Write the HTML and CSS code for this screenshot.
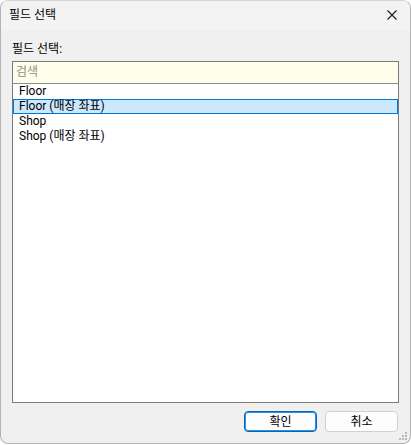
FILE: index.html
```html
<!DOCTYPE html>
<html lang="ko">
<head>
<meta charset="utf-8">
<title>필드 선택</title>
<link rel="stylesheet" href="styles.css">
</head>
<body>
<div class="window">
  <div class="titlebar">
    <span class="title">필드 선택</span>
    <span class="close">
      <svg width="12" height="12" viewBox="0 0 12 12"><path d="M1.5 1.5 L10.5 10.5 M10.5 1.5 L1.5 10.5" stroke="#1a1a1a" stroke-width="1.1" fill="none"/></svg>
    </span>
  </div>
  <div class="content">
    <div class="label">필드 선택:</div>
    <div class="listbox">
      <div class="search">검색</div>
      <div class="items">
        <div class="item">Floor</div>
        <div class="item selected">Floor (매장 좌표)</div>
        <div class="item">Shop</div>
        <div class="item">Shop (매장 좌표)</div>
      </div>
    </div>
    <div class="buttons">
      <button class="btn primary">확인</button>
      <button class="btn">취소</button>
    </div>
  </div>
  <svg class="grip" width="9" height="9" viewBox="0 0 9 9">
    <rect x="6" y="0" width="2" height="2" fill="#b8b8b8"/>
    <rect x="3" y="3" width="2" height="2" fill="#b8b8b8"/>
    <rect x="6" y="3" width="2" height="2" fill="#b8b8b8"/>
    <rect x="0" y="6" width="2" height="2" fill="#b8b8b8"/>
    <rect x="3" y="6" width="2" height="2" fill="#b8b8b8"/>
    <rect x="6" y="6" width="2" height="2" fill="#b8b8b8"/>
  </svg>
</div>
</body>
</html>
```

FILE: styles.css
```css
html, body {
  margin: 0;
  padding: 0;
  background: #ffffff;
}
body {
  font-family: Roboto, "Noto Sans CJK KR", sans-serif;
  font-size: 12px;
  color: #000;
}
.window {
  position: relative;
  box-sizing: border-box;
  width: 411px;
  height: 444px;
  border: 1px solid #b4b4b4;
  border-top-color: #d4d4d4;
  border-radius: 8px;
  background: #f0f0f0;
  display: flex;
  flex-direction: column;
  overflow: hidden;
}
.titlebar {
  height: 29px;
  background: #f3f3f3;
  display: flex;
  align-items: center;
  justify-content: space-between;
  padding: 0 9px 0 8px;
}
.title {
  font-size: 12px;
  line-height: 16px;
  margin-top: -2px;
}
.close {
  display: flex;
  width: 12px;
  height: 12px;
  margin-top: -1px;
  margin-right: 3px;
}
.content {
  flex: 1;
  display: flex;
  flex-direction: column;
  padding: 0 11px;
}
.label {
  line-height: 16px;
  margin-top: 11px;
}
.listbox {
  margin-top: 4px;
  height: 342px;
  box-sizing: border-box;
  border: 1px solid #7a7a7a;
  background: #ffffff;
  display: flex;
  flex-direction: column;
}
.search {
  height: 22px;
  box-sizing: border-box;
  border-bottom: 1px solid #8e8e8e;
  background: #fefeea;
  color: #8f8f8f;
  line-height: 21px;
  padding-left: 3px;
}
.items {
  display: flex;
  flex-direction: column;
}
.item {
  height: 15px;
  line-height: 15px;
  padding-left: 6px;
  box-sizing: border-box;
  white-space: nowrap;
}
.item.selected {
  background: #cce8ff;
  box-shadow: inset 0 0 0 1px #0078d7;
}
.buttons {
  margin-top: 8px;
  display: flex;
  justify-content: flex-end;
  gap: 8px;
  padding-right: 1px;
}
.btn {
  width: 73px;
  height: 21px;
  box-sizing: border-box;
  border: 1px solid #d0d0d0;
  border-radius: 4px;
  background: #fdfdfd;
  font-family: inherit;
  font-size: 12px;
  line-height: 16px;
  padding: 0;
  color: #000;
}
.btn.primary {
  border-color: #0067c0;
  box-shadow: inset 0 0 0 1px #2f8fde;
}
.grip {
  position: absolute;
  right: 2px;
  bottom: 2px;
}
```
